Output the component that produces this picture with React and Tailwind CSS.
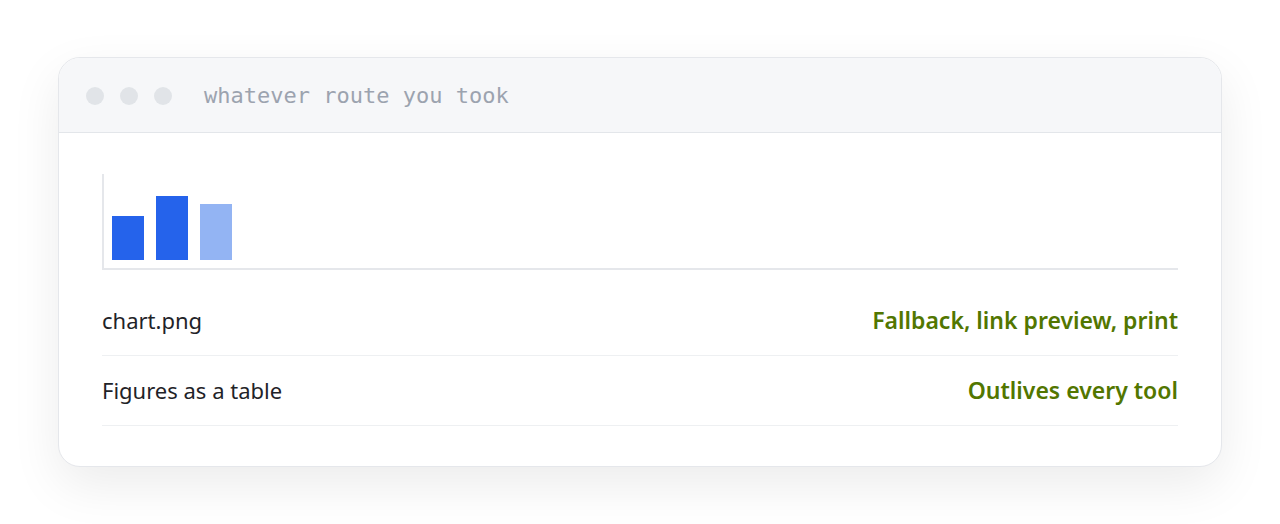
export default function App() {
  return (
    <div className="w-[1280px] h-[524px] bg-white pt-[57px] px-[58px]">
      <div className="rounded-[22px] border border-[#e5e7eb] bg-white overflow-hidden shadow-[0_18px_50px_rgba(0,0,0,0.08)]">
        <div className="h-[75px] bg-[#f6f7f9] border-b border-[#e3e6ea] flex items-center pl-[27px] pt-[2px]">
          <div className="flex gap-[16px]">
            <span className="w-[18px] h-[18px] rounded-full bg-[#e1e4e8]" />
            <span className="w-[18px] h-[18px] rounded-full bg-[#e1e4e8]" />
            <span className="w-[18px] h-[18px] rounded-full bg-[#e1e4e8]" />
          </div>
          <span className="ml-[32px] text-[22px] text-[#9ca3af] font-['DejaVu_Sans_Mono',monospace] leading-none">whatever route you took</span>
        </div>
        <div className="px-[43px] pt-[41px] pb-[40px] font-['Noto_Sans',sans-serif]">
          <div className="h-[96px] border-l-2 border-b-2 border-[#e5e7eb] flex items-end gap-[12px] pl-[8px] pb-[8px]">
            <div className="w-[32px] h-[44px] bg-[#2563eb]" />
            <div className="w-[32px] h-[64px] bg-[#2563eb]" />
            <div className="w-[32px] h-[56px] bg-[#93b4f3]" />
          </div>
          <div className="mt-[16px]">
            <div className="h-[70px] flex items-center justify-between border-b border-[#eef0f2]">
              <span className="text-[22px] text-[#1f2328]">chart.png</span>
              <span className="text-[23px] text-[#527600] font-semibold">Fallback, link preview, print</span>
            </div>
            <div className="h-[70px] flex items-center justify-between border-b border-[#eef0f2]">
              <span className="text-[22px] text-[#1f2328]">Figures as a table</span>
              <span className="text-[23px] text-[#527600] font-semibold">Outlives every tool</span>
            </div>
          </div>
        </div>
      </div>
    </div>
  );
}
